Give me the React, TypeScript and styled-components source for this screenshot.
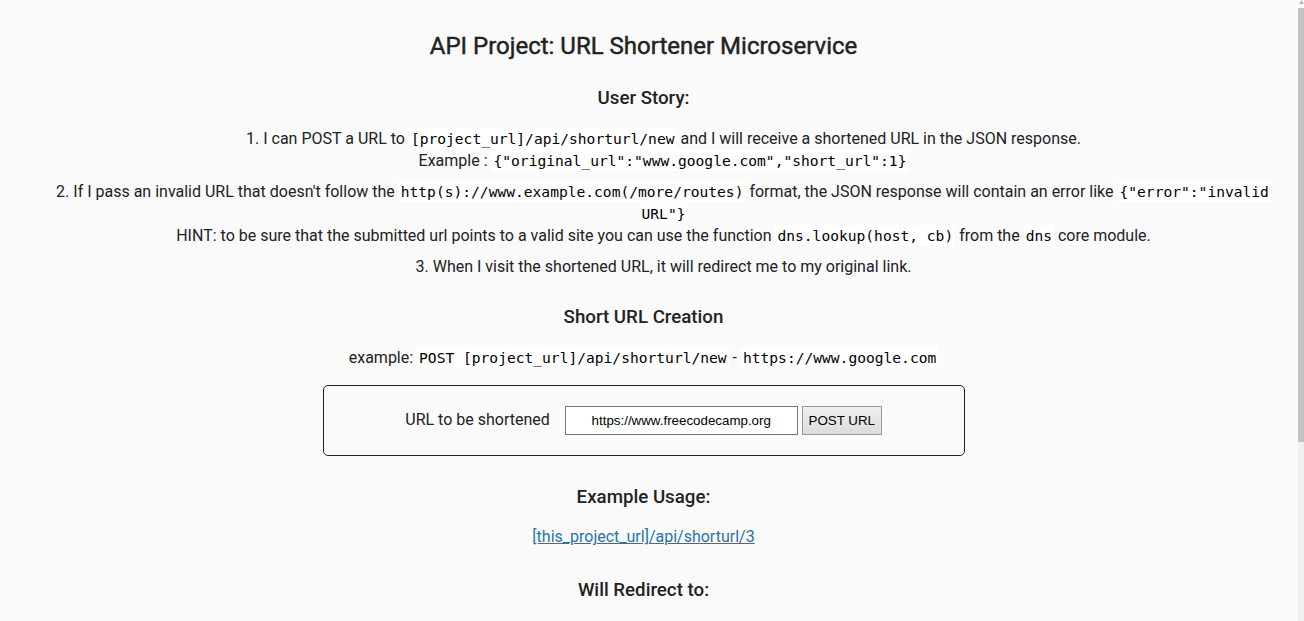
import React from "react";
import styled, { createGlobalStyle } from "styled-components";

const GlobalStyle = createGlobalStyle`
  html, body {
    margin: 0;
    padding: 0;
    background-color: #fafafa;
  }
  body {
    font-family: Roboto, "Liberation Sans", sans-serif;
    font-size: 16px;
    line-height: 22.4px;
    color: #222;
  }
`;

const Page = styled.div`
  box-sizing: border-box;
  margin-right: 17px;
  padding: 35px 8px 40px;
  text-align: center;
`;

const Title = styled.h2`
  margin: 0;
  font-size: 24px;
  font-weight: 400;
  line-height: 22.4px;
  -webkit-text-stroke: 0.45px #222;
`;

const Heading = styled.h3<{ $top?: number }>`
  margin: ${(p) => (p.$top ?? 30)}px 0 18px;
  font-size: 18.72px;
  font-weight: 500;
  line-height: 22.4px;
`;

const Stories = styled.ul`
  list-style: none;
  margin: 0;
  padding: 0 0 0 40px;
`;

const Story = styled.li`
  margin-bottom: 8px;
`;

const Line = styled.div`
  display: block;
  white-space: nowrap;
`;

const Code = styled.code`
  font-family: "DejaVu Sans Mono", "Liberation Mono", monospace;
  font-size: 14.6px;
  line-height: 1;
  padding: 2px;
  color: #000;
  background-color: #fff;
`;

const Paragraph = styled.p`
  margin: 0 0 16px;
`;

const Form = styled.form`
  box-sizing: border-box;
  width: 642px;
  height: 71px;
  margin: 0 auto;
  padding: 20px;
  border: 1px solid #222;
  border-radius: 5px;
  display: flex;
  align-items: center;
  justify-content: center;
`;

const Label = styled.label`
  margin-right: 15px;
  white-space: nowrap;
`;

const UrlInput = styled.input`
  box-sizing: border-box;
  width: 233px;
  height: 29px;
  margin: 0;
  padding: 0 4px;
  border: 1px solid #767676;
  background: #fff;
  font-family: "Liberation Sans", Arial, sans-serif;
  font-size: 13.33px;
  color: #000;
  text-align: center;
  outline: none;
`;

const SubmitButton = styled.button`
  box-sizing: border-box;
  width: 80px;
  height: 29px;
  margin: 0 0 0 4px;
  padding: 0;
  border: 1px solid #9a9a9a;
  background: linear-gradient(#efefef, #dcdcdc);
  font-family: "Liberation Sans", Arial, sans-serif;
  font-size: 13.33px;
  color: #000;
  white-space: nowrap;
`;

const Link = styled.a`
  color: #2574a9;
  text-decoration: underline;
`;

const ScrollTrack = styled.div`
  position: fixed;
  top: 0;
  right: 0;
  width: 6px;
  height: 100vh;
  background: #efefef;
  display: flex;
  flex-direction: column;
`;

const ScrollArrow = styled.div`
  height: 8px;
  display: flex;
  align-items: flex-start;
  justify-content: center;
  background: #fafafa;
`;

const ScrollThumb = styled.div`
  height: 434px;
  background: #c4c4c4;
`;

const ArrowGlyph = () => (
  <svg width="5" height="4" viewBox="0 0 5 4">
    <path d="M0 4 L5 4 L2.5 0 Z" fill="#bbb" />
  </svg>
);

export default function App() {
  return (
    <>
      <GlobalStyle />
      <Page>
        <Title>API Project: URL Shortener Microservice</Title>
        <Heading>User Story:</Heading>
        <Stories>
          <Story>
            <Line>
              1. I can POST a URL to <Code>[project_url]/api/shorturl/new</Code> and I will
              receive a shortened URL in the JSON response.
            </Line>
            <Line>
              Example : <Code>{'{"original_url":"www.google.com","short_url":1}'}</Code>
            </Line>
          </Story>
          <Story>
            <Line>
              2. If I pass an invalid URL that doesn't follow the{" "}
              <Code>http(s)://www.example.com(/more/routes)</Code> format, the JSON response will
              contain an error like <Code>{'{"error":"invalid'}</Code>
            </Line>
            <Line>
              <Code>{'URL"}'}</Code>
            </Line>
            <Line>
              HINT: to be sure that the submitted url points to a valid site you can use the
              function <Code>dns.lookup(host, cb)</Code> from the <Code>dns</Code> core module.
            </Line>
          </Story>
          <Story>
            <Line>3. When I visit the shortened URL, it will redirect me to my original link.</Line>
          </Story>
        </Stories>

        <Heading $top={28}>Short URL Creation</Heading>
        <Paragraph>
          example: <Code>POST [project_url]/api/shorturl/new</Code> -{" "}
          <Code>https://www.google.com</Code>
        </Paragraph>
        <Form onSubmit={(e) => e.preventDefault()}>
          <Label htmlFor="url_input">URL to be shortened</Label>
          <UrlInput
            id="url_input"
            type="text"
            name="url"
            defaultValue="https://www.freecodecamp.org"
          />
          <SubmitButton type="submit">POST URL</SubmitButton>
        </Form>

        <Heading>Example Usage:</Heading>
        <Paragraph>
          <Link href="#">[this_project_url]/api/shorturl/3</Link>
        </Paragraph>

        <Heading>Will Redirect to:</Heading>
      </Page>
      <ScrollTrack aria-hidden="true">
        <ScrollArrow>
          <ArrowGlyph />
        </ScrollArrow>
        <ScrollThumb />
      </ScrollTrack>
    </>
  );
}
